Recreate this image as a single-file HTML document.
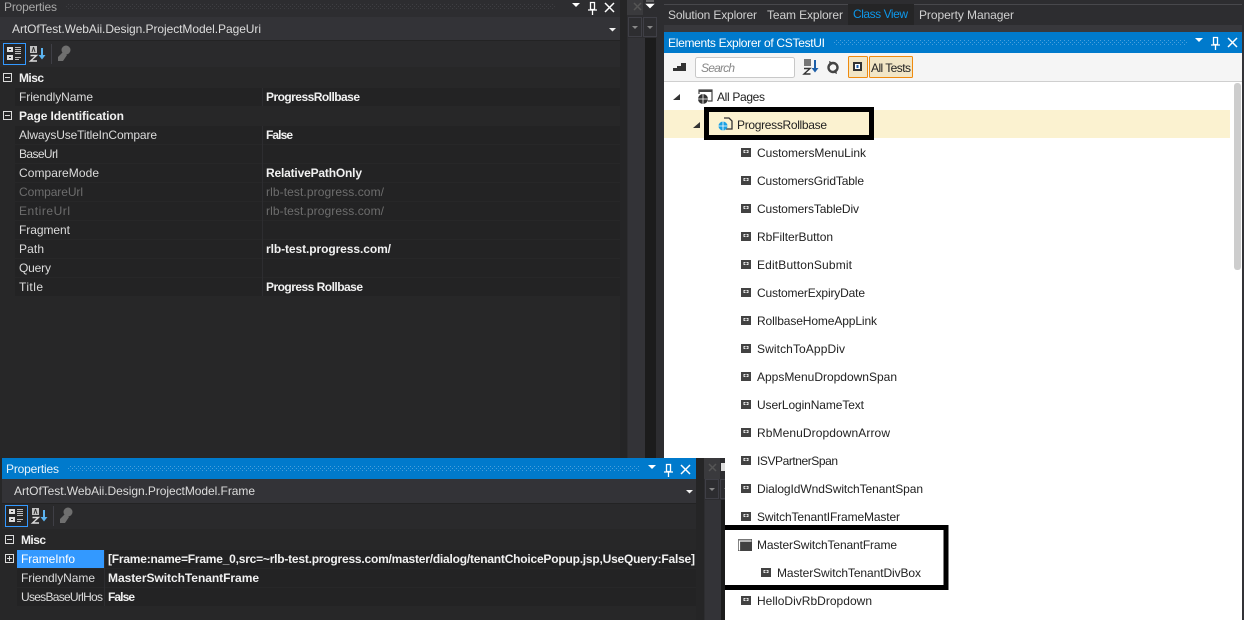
<!DOCTYPE html>
<html><head><meta charset="utf-8"><style>
html,body{margin:0;padding:0;background:#272728;width:1244px;height:620px;overflow:hidden}
svg{display:block}
text{font-family:"Liberation Sans",sans-serif;font-size:12px}
.n{fill:#dcdcdc}.b{fill:#f1f1f1;font-weight:bold}.d{fill:#6d6d6d}.t{fill:#222}
</style></head><body>
<svg width="1244" height="620" viewBox="0 0 1244 620" xmlns="http://www.w3.org/2000/svg">
<defs>
<pattern id="g" width="4" height="4" patternUnits="userSpaceOnUse"><rect width="1" height="1" fill="#3e3e42"/><rect x="2" y="2" width="1" height="1" fill="#3e3e42"/></pattern>
<pattern id="gb" width="4" height="4" patternUnits="userSpaceOnUse"><rect width="1" height="1" fill="#4aa0dc"/><rect x="2" y="2" width="1" height="1" fill="#4aa0dc"/></pattern>
<g id="el"><rect width="10" height="9" fill="#424242"/><rect x="2.500" y="2" width="2" height="3" fill="#e8e8e8"/><rect x="5.500" y="2" width="2" height="3" fill="#e8e8e8"/><rect x="3.500" y="3" width="1" height="1" fill="#424242"/><rect x="5.500" y="3" width="1" height="1" fill="#424242"/></g>
<g id="minus"><rect x=".5" y=".5" width="8" height="8" fill="none" stroke="#dcdcdc"/><rect x="2" y="4" width="5" height="1" fill="#dcdcdc"/></g>
<g id="tools">
<rect x=".5" y=".5" width="22" height="21" fill="#252526" stroke="#3399ff"/>
<rect x="4" y="4" width="6" height="5" fill="#dcdcdc"/><rect x="4" y="12" width="6" height="5" fill="#dcdcdc"/><rect x="6" y="6" width="2" height="1" fill="#252526"/><rect x="6" y="14" width="2" height="1" fill="#252526"/>
<path d="M12 4.500h6M12 6.500h6M12 8.500h6M12 10.500h6M12 14.500h6M12 16.500h4" stroke="#bbb" stroke-width="1"/>
<rect x="27" y="3" width="7" height="7" fill="#c4c4c4"/><path d="M30.500 4l-1.500 5M30.500 4l1.500 5" stroke="#333" fill="none"/>
<path d="M27.500 12.500h6l-6 5.500h6.500" stroke="#ddd" fill="none" stroke-width="1.400"/>
<path d="M39 5v9" stroke="#5bb3f0" stroke-width="2"/><path d="M35.500 12h7l-3.500 4.500z" fill="#5bb3f0"/>
<rect x="48" y="1" width="1" height="20" fill="#3f3f46"/>
<circle cx="63" cy="7" r="4.500" fill="#6f6f6f"/><path d="M60 9l-5 5v4h5l4-6z" fill="#6f6f6f"/>
</g>
<g id="win"><path d="M0 0h8l-4 4z" fill="#fff"/><path d="M18.500 -.5h4v7h-4zM16 7h9M20.500 7v5" fill="none" stroke="#fff" stroke-width="1.300"/><path d="M33 0l9 9M42 0l-9 9" stroke="#fff" stroke-width="1.500"/></g>
<g id="dock"><rect x=".5" y=".5" width="13" height="19" fill="#2d2d30" stroke="#3f3f46"/><path d="M4 9h6l-3 3z" fill="#888"/><rect x="15.500" y=".5" width="13" height="19" fill="#2d2d30" stroke="#3f3f46"/><path d="M19 9h6l-3 3z" fill="#888"/></g>
</defs>

<!-- left top panel -->
<rect width="1244" height="620" fill="#272728"/>
<rect x="0" y="0" width="620" height="17" fill="#2d2d30"/>
<text x="4" y="11" fill="#a8a8a8" textLength="53">Properties</text>
<rect x="65" y="3" width="490" height="6" fill="url(#g)"/>
<use href="#win" x="572" y="3"/>
<rect x="0" y="17" width="620" height="24" fill="#333337"/>
<rect x="0" y="40" width="620" height="1" fill="#232324"/>
<text x="12" y="33" fill="#dcdcdc" textLength="249">ArtOfTest.WebAii.Design.ProjectModel.PageUri</text>
<path d="M609 28h7l-3.500 3.500z" fill="#f1f1f1"/>
<rect x="0" y="41" width="620" height="26" fill="#2a2a2c"/>
<use href="#tools" x="3" y="43"/>

<use href="#minus" x="3" y="73"/>
<use href="#minus" x="3" y="111"/>
<rect x="15" y="88" width="605" height="18" fill="#232324"/>
<rect x="15" y="126" width="605" height="18" fill="#232324"/>
<rect x="15" y="145" width="605" height="18" fill="#232324"/>
<rect x="15" y="164" width="605" height="18" fill="#232324"/>
<rect x="15" y="183" width="605" height="18" fill="#232324"/>
<rect x="15" y="202" width="605" height="18" fill="#232324"/>
<rect x="15" y="221" width="605" height="18" fill="#232324"/>
<rect x="15" y="240" width="605" height="18" fill="#232324"/>
<rect x="15" y="259" width="605" height="18" fill="#232324"/>
<rect x="15" y="278" width="605" height="18" fill="#232324"/>
<rect x="262" y="88" width="1" height="18" fill="#2d2d30"/>
<rect x="262" y="126" width="1" height="170" fill="#2d2d30"/>

<text x="19" y="82" class="b" textLength="25">Misc</text>
<text x="19" y="101" class="n" textLength="74">FriendlyName</text>
<text x="266" y="101" class="b" textLength="94">ProgressRollbase</text>
<text x="19" y="120" class="b" textLength="105">Page Identification</text>
<text x="19" y="139" class="n" textLength="138">AlwaysUseTitleInCompare</text>
<text x="266" y="139" class="b" textLength="27">False</text>
<text x="19" y="158" class="n" textLength="39">BaseUrl</text>
<text x="19" y="177" class="n" textLength="80">CompareMode</text>
<text x="266" y="177" class="b" textLength="96">RelativePathOnly</text>
<text x="19" y="196" class="d" textLength="64">CompareUrl</text>
<text x="266" y="196" class="d" textLength="118">rlb-test.progress.com/</text>
<text x="19" y="215" class="d" textLength="51">EntireUrl</text>
<text x="266" y="215" class="d" textLength="118">rlb-test.progress.com/</text>
<text x="19" y="234" class="n" textLength="51">Fragment</text>
<text x="19" y="253" class="n" textLength="25">Path</text>
<text x="266" y="253" class="b" textLength="125">rlb-test.progress.com/</text>
<text x="19" y="272" class="n" textLength="32">Query</text>
<text x="19" y="291" class="n" textLength="24">Title</text>
<text x="266" y="291" class="b" textLength="97">Progress Rollbase</text>

<!-- middle dock strip -->
<rect x="620" y="0" width="44" height="460" fill="#2d2d30"/>
<rect x="620" y="0" width="7" height="460" fill="#252526"/>
<rect x="627" y="0" width="16" height="15" fill="#3a3a3d"/>
<path d="M634 3l7 7M641 3l-7 7" stroke="#555" stroke-width="1.500"/>
<path d="M646 1h8M646 4h8l-4 4z" fill="#fff" stroke="#fff" stroke-width=".6"/>
<use href="#dock" x="628" y="17"/>
<rect x="645" y="38" width="11" height="422" fill="#1c1c1c"/>
<rect x="628" y="38" width="17" height="422" fill="#333337"/>

<!-- right panel -->
<rect x="664" y="0" width="580" height="32" fill="#2d2d30"/>
<rect x="664" y="4" width="578" height="1" fill="#48484c"/>
<rect x="664" y="25" width="580" height="7" fill="#38383c"/>
<rect x="848" y="4" width="66" height="21" fill="#252526"/>
<text x="668" y="19" fill="#d0d0d0" textLength="89">Solution Explorer</text>
<text x="767" y="19" fill="#d0d0d0" textLength="76">Team Explorer</text>
<text x="853" y="18" fill="#0e97ea" textLength="55">Class View</text>
<text x="919" y="19" fill="#d0d0d0" textLength="95">Property Manager</text>
<rect x="664" y="32" width="578" height="21" fill="#007acc"/>
<text x="668" y="47" fill="#fff" textLength="157">Elements Explorer of CSTestUI</text>
<rect x="833" y="40" width="354" height="5" fill="url(#gb)"/>
<use href="#win" x="1195" y="38"/>
<rect x="664" y="53" width="578" height="28" fill="#f5f5f5"/>
<rect x="664" y="81" width="578" height="1" fill="#cfcfcf"/>
<rect x="664" y="82" width="578" height="538" fill="#fff"/>
<rect x="1242" y="0" width="2" height="620" fill="#333337"/>
<rect x="1242" y="0" width="2" height="32" fill="#2d2d30"/>
<path d="M673 71v-3h4v-2h4v-3h5v8z" fill="#333"/>
<rect x="695.500" y="57.500" width="99" height="20" rx="2" fill="#fff" stroke="#c8c8c8"/>
<text x="701" y="72" fill="#888" font-style="italic" textLength="34">Search</text>
<rect x="804" y="59" width="7" height="7" fill="#777"/><path d="M804 68.500h6l-6 5.500h6.500" stroke="#333" fill="none" stroke-width="1.400"/>
<path d="M815 60v10" stroke="#1c5ea8" stroke-width="2"/><path d="M811.500 68h7l-3.500 4.500z" fill="#1c5ea8"/>
<circle cx="833" cy="67.500" r="4.500" fill="none" stroke="#444" stroke-width="2.400"/><path d="M829 61l5 2-4 3zM837 74l-5-2 4-3z" fill="#444"/>
<rect x="848.500" y="56.500" width="19" height="21" rx="1" fill="#f2e6c6" stroke="#ef8a0e"/>
<rect x="853" y="62" width="9" height="9" fill="#333"/><rect x="855" y="64" width="5" height="5" fill="#fff"/><rect x="856.500" y="65" width="2" height="3" fill="#1c5ea8"/>
<rect x="869.500" y="56.500" width="43" height="21" rx="1" fill="#f2e6c6" stroke="#ef8a0e"/>
<text x="871" y="72" class="t" textLength="40">All Tests</text>
<rect x="1234" y="83" width="7" height="187" rx="3" fill="#cdcdcd"/>

<rect x="664" y="110" width="566" height="28" fill="#fbf2d0"/>
<path d="M673 100l7-6v6z" fill="#333"/>
<path d="M699 94v-4h13v11h-4" fill="none" stroke="#444" stroke-width="1.200"/><rect x="699" y="90" width="13" height="2" fill="#444"/><circle cx="703" cy="99" r="5" fill="#333"/><path d="M698 99h10M703 94v10" stroke="#fff" stroke-width=".8"/>
<text x="717" y="101" class="t" textLength="48">All Pages</text>
<path d="M693 128l7-6v6z" fill="#333"/>
<rect x="706.500" y="109.500" width="165" height="28" fill="none" stroke="#000" stroke-width="5"/>
<path d="M724 118h5l3 3v8h-6" fill="none" stroke="#333" stroke-width="1.300"/><circle cx="723" cy="126" r="4.500" fill="#1ba1e2"/><path d="M718.500 126h9M723 121.500v9" stroke="#fff" stroke-width=".8"/>
<text x="737" y="129" class="t" textLength="90">ProgressRollbase</text>

<use href="#el" x="741" y="148"/><text x="757" y="157" class="t" textLength="109">CustomersMenuLink</text>
<use href="#el" x="741" y="176"/><text x="757" y="185" class="t" textLength="107">CustomersGridTable</text>
<use href="#el" x="741" y="204"/><text x="757" y="213" class="t" textLength="102">CustomersTableDiv</text>
<use href="#el" x="741" y="232"/><text x="757" y="241" class="t" textLength="76">RbFilterButton</text>
<use href="#el" x="741" y="260"/><text x="757" y="269" class="t" textLength="95">EditButtonSubmit</text>
<use href="#el" x="741" y="288"/><text x="757" y="297" class="t" textLength="108">CustomerExpiryDate</text>
<use href="#el" x="741" y="316"/><text x="757" y="325" class="t" textLength="120">RollbaseHomeAppLink</text>
<use href="#el" x="741" y="344"/><text x="757" y="353" class="t" textLength="88">SwitchToAppDiv</text>
<use href="#el" x="741" y="372"/><text x="757" y="381" class="t" textLength="140">AppsMenuDropdownSpan</text>
<use href="#el" x="741" y="400"/><text x="757" y="409" class="t" textLength="107">UserLoginNameText</text>
<use href="#el" x="741" y="428"/><text x="757" y="437" class="t" textLength="133">RbMenuDropdownArrow</text>

<!-- bottom dock strip -->
<rect x="696" y="458" width="29" height="162" fill="#2d2d30"/>
<rect x="696" y="458" width="8" height="162" fill="#252526"/>
<rect x="704" y="458" width="16" height="21" fill="#3a3a3d"/>
<path d="M709 464l7 7M716 464l-7 7" stroke="#555" stroke-width="1.500"/>
<path d="M721 463h4v8h-4z" fill="#ddd"/>
<use href="#dock" x="705" y="479"/>
<rect x="705" y="500" width="20" height="120" fill="#333337"/>
<rect x="721" y="500" width="4" height="120" fill="#1c1c1c"/>
<rect x="725" y="458" width="517" height="162" fill="#fff"/>

<use href="#el" x="741" y="456"/><text x="757" y="465" class="t" textLength="81">ISVPartnerSpan</text>
<use href="#el" x="741" y="484"/><text x="757" y="493" class="t" textLength="166">DialogIdWndSwitchTenantSpan</text>
<use href="#el" x="741" y="512"/><text x="757" y="521" class="t" textLength="143">SwitchTenantIFrameMaster</text>
<rect x="738" y="539" width="14" height="12" fill="#424242"/><path d="M738.500 550.500v-11h13" fill="none" stroke="#777"/><path d="M739.500 550.500v-9.500h12" fill="none" stroke="#fff" stroke-width="1.200"/>
<text x="757" y="549" class="t" textLength="140">MasterSwitchTenantFrame</text>
<use href="#el" x="761" y="568"/><text x="777" y="577" class="t" textLength="144">MasterSwitchTenantDivBox</text>
<use href="#el" x="741" y="596"/><text x="757" y="605" class="t" textLength="115">HelloDivRbDropdown</text>
<path d="M725 527.500h221V587.500H725" fill="none" stroke="#000" stroke-width="5"/>

<!-- bottom panel -->
<rect x="0" y="458" width="696" height="162" fill="#272728"/>
<rect x="2" y="458" width="694" height="21" fill="#007acc"/>
<text x="6" y="473" fill="#e8f2fa" textLength="53">Properties</text>
<rect x="67" y="466" width="572" height="5" fill="url(#gb)"/>
<use href="#win" x="648" y="465"/>
<rect x="2" y="479" width="694" height="24" fill="#333337"/>
<rect x="2" y="503" width="694" height="1" fill="#232324"/>
<text x="14" y="495" fill="#dcdcdc" textLength="241">ArtOfTest.WebAii.Design.ProjectModel.Frame</text>
<path d="M686 490h7l-3.500 3.500z" fill="#f1f1f1"/>
<rect x="2" y="504" width="694" height="25" fill="#2a2a2c"/>
<use href="#tools" x="5" y="505"/>
<use href="#minus" x="5" y="535"/>
<rect x="5.500" y="554.500" width="8" height="8" fill="none" stroke="#dcdcdc"/><path d="M7 558.500h5M9.500 556v5" stroke="#dcdcdc"/>
<rect x="17" y="550" width="679" height="18" fill="#232324"/>
<rect x="17" y="569" width="679" height="18" fill="#232324"/>
<rect x="17" y="588" width="679" height="18" fill="#232324"/>
<rect x="17" y="550" width="87" height="18" fill="#3399ff"/>
<rect x="104" y="550" width="1" height="56" fill="#2d2d30"/>
<text x="21" y="544" class="b" textLength="25">Misc</text>
<text x="21" y="563" fill="#fff" textLength="54">FrameInfo</text>
<text x="21" y="582" class="n" textLength="74">FriendlyName</text>
<text x="21" y="601" class="n" textLength="82">UsesBaseUrlHos</text>
<text x="108" y="563" class="b" textLength="587">[Frame:name=Frame_0,src=~rlb-test.progress.com/master/dialog/tenantChoicePopup.jsp,UseQuery:False]</text>
<text x="108" y="582" class="b" textLength="151">MasterSwitchTenantFrame</text>
<text x="108" y="601" class="b" textLength="27">False</text>
</svg>
</body></html>
